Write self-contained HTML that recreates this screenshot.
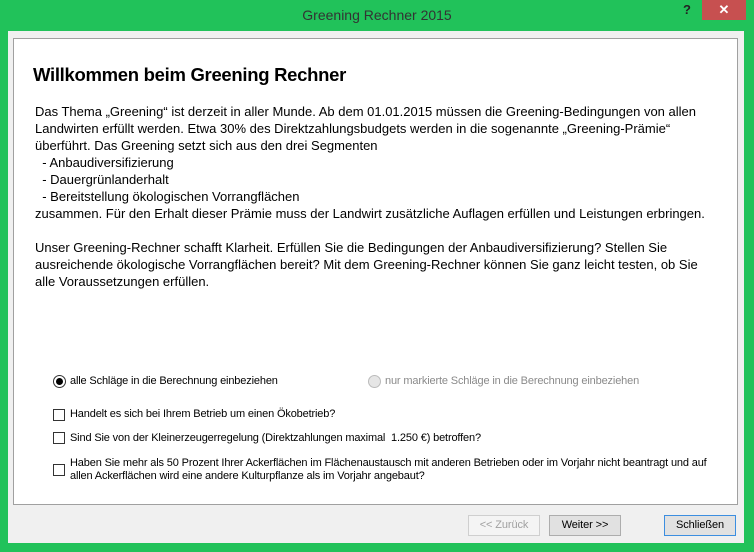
<!DOCTYPE html>
<html><head><meta charset="utf-8"><style>
*{margin:0;padding:0;box-sizing:border-box}
body{width:754px;height:552px;background:#21c25a;position:relative;overflow:hidden;font-family:"Liberation Sans",sans-serif}
.abs{position:absolute;white-space:nowrap}
.title{left:0;width:754px;top:7px;text-align:center;font-size:14px;color:#333}
.close{left:702px;top:0;width:44px;height:20px;background:#c75050;color:#fff;text-align:center;font-size:13px;line-height:20px;font-weight:bold}
.help{left:683px;top:2px;font-size:13px;font-weight:bold;color:#222}
.client{left:8px;top:31px;width:736px;height:512px;background:#f0f0f0}
.panel{left:13px;top:38px;width:725px;height:467px;background:#fff;border:1px solid #a0a0a0}
h1{position:absolute;left:33px;top:64px;font-size:18.5px;font-weight:bold;color:#000;white-space:nowrap;letter-spacing:-0.3px}
.t{font-size:13px;color:#000;left:35px;line-height:17px;letter-spacing:0}
.c{font-size:11px;letter-spacing:-0.15px;color:#000}
.box{width:12px;height:12px;border:1px solid #333;background:#fff}
.rad{width:13px;height:13px;border-radius:50%;border:1px solid #333;background:#fff}
.btn{height:21px;border:1px solid #adadad;background:#e1e1e1;font-size:11px;text-align:center;line-height:19px;letter-spacing:-0.1px}
</style></head><body>
<div class="abs title">Greening Rechner 2015</div>
<div class="abs help">?</div>
<div class="abs close">✕</div>
<div class="abs client"></div>
<div class="abs panel"></div>
<h1>Willkommen beim Greening Rechner</h1>
<div class="abs t" style="top:103px">Das Thema „Greening“ ist derzeit in aller Munde. Ab dem 01.01.2015 müssen die Greening-Bedingungen von allen<br>Landwirten erfüllt werden. Etwa 30% des Direktzahlungsbudgets werden in die sogenannte „Greening-Prämie“<br>überführt. Das Greening setzt sich aus den drei Segmenten<br>&nbsp;&nbsp;- Anbaudiversifizierung<br>&nbsp;&nbsp;- Dauergrünlanderhalt<br>&nbsp;&nbsp;- Bereitstellung ökologischen Vorrangflächen<br>zusammen. Für den Erhalt dieser Prämie muss der Landwirt zusätzliche Auflagen erfüllen und Leistungen erbringen.<br><br>Unser Greening-Rechner schafft Klarheit. Erfüllen Sie die Bedingungen der Anbaudiversifizierung? Stellen Sie<br>ausreichende ökologische Vorrangflächen bereit? Mit dem Greening-Rechner können Sie ganz leicht testen, ob Sie<br>alle Voraussetzungen erfüllen.</div>

<div class="abs rad" style="left:53px;top:375px"><div style="width:7px;height:7px;border-radius:50%;background:#000;margin:2px"></div></div>
<div class="abs c" style="left:70px;top:375px">alle Schläge in die Berechnung einbeziehen</div>
<div class="abs rad" style="left:368px;top:375px;border-color:#bbb;background:#e6e6e6"></div>
<div class="abs c" style="left:385px;top:375px;color:#8a8a8a">nur markierte Schläge in die Berechnung einbeziehen</div>

<div class="abs box" style="left:53px;top:409px"></div>
<div class="abs c" style="left:70px;top:408px">Handelt es sich bei Ihrem Betrieb um einen Ökobetrieb?</div>
<div class="abs box" style="left:53px;top:432px"></div>
<div class="abs c" style="left:70px;top:432px">Sind Sie von der Kleinerzeugerregelung (Direktzahlungen maximal&nbsp; 1.250 €) betroffen?</div>
<div class="abs box" style="left:53px;top:464px"></div>
<div class="abs c" style="left:70px;top:457px;line-height:13px">Haben Sie mehr als 50 Prozent Ihrer Ackerflächen im Flächenaustausch mit anderen Betrieben oder im Vorjahr nicht beantragt und auf<br>allen Ackerflächen wird eine andere Kulturpflanze als im Vorjahr angebaut?</div>

<div class="abs btn" style="left:468px;top:515px;width:72px;color:#a0a0a0;background:#f4f4f4;border-color:#cfcfcf">&lt;&lt; Zurück</div>
<div class="abs btn" style="left:549px;top:515px;width:72px">Weiter &gt;&gt;</div>
<div class="abs btn" style="left:664px;top:515px;width:72px;border-color:#3c8ee0">Schließen</div>
</body></html>
